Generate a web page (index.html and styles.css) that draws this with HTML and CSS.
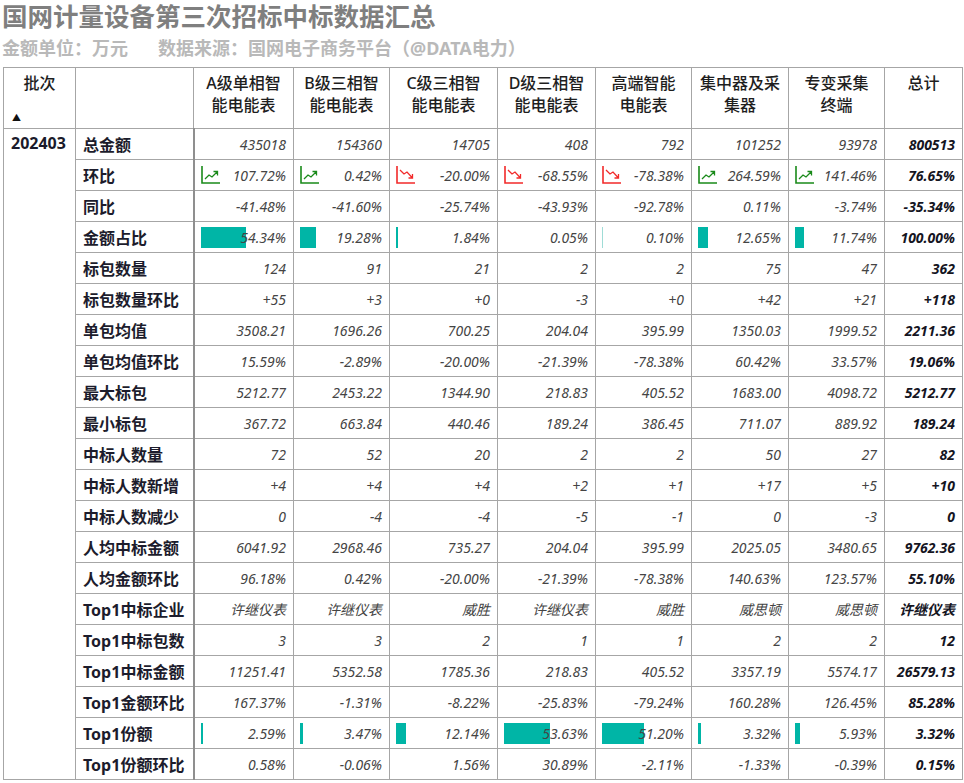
FILE: index.html
```html
<!DOCTYPE html>
<html lang="zh-CN">
<head>
<meta charset="utf-8">
<title>国网计量设备第三次招标中标数据汇总</title>
<link rel="stylesheet" href="styles.css">
</head>
<body>
<h1 class="title">国网计量设备第三次招标中标数据汇总</h1>
<div class="subtitle"><span>金额单位：万元</span><span>数据来源：国网电子商务平台（@DATA电力）</span></div>
<table class="grid">
<colgroup>
<col style="width:72px"><col style="width:118px"><col style="width:100px"><col style="width:96px"><col style="width:108px"><col style="width:98px"><col style="width:96px"><col style="width:97px"><col style="width:96px"><col style="width:78px">
</colgroup>
<thead>
<tr class="head">
<th class="batch-h"><div>批次</div><div class="sort">▲</div></th>
<th></th>
<th>A级单相智<br>能电能表</th>
<th>B级三相智<br>能电能表</th>
<th>C级三相智<br>能电能表</th>
<th>D级三相智<br>能电能表</th>
<th>高端智能<br>电能表</th>
<th>集中器及采<br>集器</th>
<th>专变采集<br>终端</th>
<th>总计</th>
</tr>
</thead>
<tbody>
<tr><td class="batch" rowspan="21">202403</td><td class="lbl">总金额</td><td class="v">435018</td><td class="v">154360</td><td class="v">14705</td><td class="v">408</td><td class="v">792</td><td class="v">101252</td><td class="v">93978</td><td class="v tot">800513</td></tr>
<tr><td class="lbl">环比</td>
<td class="v"><div class="ic"><svg class="trend up" viewBox="0 0 19 18"><path class="ax" d="M1 0V17H19"/><path d="M4 13L8 9L11 11L16.5 5.5M12.5 5.5H16.5V9.5"/></svg><span>107.72%</span></div></td>
<td class="v"><div class="ic"><svg class="trend up" viewBox="0 0 19 18"><path class="ax" d="M1 0V17H19"/><path d="M4 13L8 9L11 11L16.5 5.5M12.5 5.5H16.5V9.5"/></svg><span>0.42%</span></div></td>
<td class="v"><div class="ic"><svg class="trend down" viewBox="0 0 19 18"><path class="ax" d="M1 0V17H19"/><path d="M4 4L8 8L11 6L16.5 12M16.5 8V12H12.5"/></svg><span>-20.00%</span></div></td>
<td class="v"><div class="ic"><svg class="trend down" viewBox="0 0 19 18"><path class="ax" d="M1 0V17H19"/><path d="M4 4L8 8L11 6L16.5 12M16.5 8V12H12.5"/></svg><span>-68.55%</span></div></td>
<td class="v"><div class="ic"><svg class="trend down" viewBox="0 0 19 18"><path class="ax" d="M1 0V17H19"/><path d="M4 4L8 8L11 6L16.5 12M16.5 8V12H12.5"/></svg><span>-78.38%</span></div></td>
<td class="v"><div class="ic"><svg class="trend up" viewBox="0 0 19 18"><path class="ax" d="M1 0V17H19"/><path d="M4 13L8 9L11 11L16.5 5.5M12.5 5.5H16.5V9.5"/></svg><span>264.59%</span></div></td>
<td class="v"><div class="ic"><svg class="trend up" viewBox="0 0 19 18"><path class="ax" d="M1 0V17H19"/><path d="M4 13L8 9L11 11L16.5 5.5M12.5 5.5H16.5V9.5"/></svg><span>141.46%</span></div></td>
<td class="v tot">76.65%</td></tr>
<tr><td class="lbl">同比</td><td class="v">-41.48%</td><td class="v">-41.60%</td><td class="v">-25.74%</td><td class="v">-43.93%</td><td class="v">-92.78%</td><td class="v">0.11%</td><td class="v">-3.74%</td><td class="v tot">-35.34%</td></tr>
<tr><td class="lbl">金额占比</td>
<td class="v"><div class="bc"><i class="bar" style="width:45px"></i><span>54.34%</span></div></td>
<td class="v"><div class="bc"><i class="bar" style="width:16px"></i><span>19.28%</span></div></td>
<td class="v"><div class="bc"><i class="bar" style="width:2px"></i><span>1.84%</span></div></td>
<td class="v"><div class="bc"><i class="bar" style="width:0px"></i><span>0.05%</span></div></td>
<td class="v"><div class="bc"><i class="bar faint" style="width:1px"></i><span>0.10%</span></div></td>
<td class="v"><div class="bc"><i class="bar" style="width:10px"></i><span>12.65%</span></div></td>
<td class="v"><div class="bc"><i class="bar" style="width:9px"></i><span>11.74%</span></div></td>
<td class="v tot">100.00%</td></tr>
<tr><td class="lbl">标包数量</td><td class="v">124</td><td class="v">91</td><td class="v">21</td><td class="v">2</td><td class="v">2</td><td class="v">75</td><td class="v">47</td><td class="v tot">362</td></tr>
<tr><td class="lbl">标包数量环比</td><td class="v">+55</td><td class="v">+3</td><td class="v">+0</td><td class="v">-3</td><td class="v">+0</td><td class="v">+42</td><td class="v">+21</td><td class="v tot">+118</td></tr>
<tr><td class="lbl">单包均值</td><td class="v">3508.21</td><td class="v">1696.26</td><td class="v">700.25</td><td class="v">204.04</td><td class="v">395.99</td><td class="v">1350.03</td><td class="v">1999.52</td><td class="v tot">2211.36</td></tr>
<tr><td class="lbl">单包均值环比</td><td class="v">15.59%</td><td class="v">-2.89%</td><td class="v">-20.00%</td><td class="v">-21.39%</td><td class="v">-78.38%</td><td class="v">60.42%</td><td class="v">33.57%</td><td class="v tot">19.06%</td></tr>
<tr><td class="lbl">最大标包</td><td class="v">5212.77</td><td class="v">2453.22</td><td class="v">1344.90</td><td class="v">218.83</td><td class="v">405.52</td><td class="v">1683.00</td><td class="v">4098.72</td><td class="v tot">5212.77</td></tr>
<tr><td class="lbl">最小标包</td><td class="v">367.72</td><td class="v">663.84</td><td class="v">440.46</td><td class="v">189.24</td><td class="v">386.45</td><td class="v">711.07</td><td class="v">889.92</td><td class="v tot">189.24</td></tr>
<tr><td class="lbl">中标人数量</td><td class="v">72</td><td class="v">52</td><td class="v">20</td><td class="v">2</td><td class="v">2</td><td class="v">50</td><td class="v">27</td><td class="v tot">82</td></tr>
<tr><td class="lbl">中标人数新增</td><td class="v">+4</td><td class="v">+4</td><td class="v">+4</td><td class="v">+2</td><td class="v">+1</td><td class="v">+17</td><td class="v">+5</td><td class="v tot">+10</td></tr>
<tr><td class="lbl">中标人数减少</td><td class="v">0</td><td class="v">-4</td><td class="v">-4</td><td class="v">-5</td><td class="v">-1</td><td class="v">0</td><td class="v">-3</td><td class="v tot">0</td></tr>
<tr><td class="lbl">人均中标金额</td><td class="v">6041.92</td><td class="v">2968.46</td><td class="v">735.27</td><td class="v">204.04</td><td class="v">395.99</td><td class="v">2025.05</td><td class="v">3480.65</td><td class="v tot">9762.36</td></tr>
<tr><td class="lbl">人均金额环比</td><td class="v">96.18%</td><td class="v">0.42%</td><td class="v">-20.00%</td><td class="v">-21.39%</td><td class="v">-78.38%</td><td class="v">140.63%</td><td class="v">123.57%</td><td class="v tot">55.10%</td></tr>
<tr><td class="lbl">Top1中标企业</td><td class="v">许继仪表</td><td class="v">许继仪表</td><td class="v">威胜</td><td class="v">许继仪表</td><td class="v">威胜</td><td class="v">威思顿</td><td class="v">威思顿</td><td class="v tot">许继仪表</td></tr>
<tr><td class="lbl">Top1中标包数</td><td class="v">3</td><td class="v">3</td><td class="v">2</td><td class="v">1</td><td class="v">1</td><td class="v">2</td><td class="v">2</td><td class="v tot">12</td></tr>
<tr><td class="lbl">Top1中标金额</td><td class="v">11251.41</td><td class="v">5352.58</td><td class="v">1785.36</td><td class="v">218.83</td><td class="v">405.52</td><td class="v">3357.19</td><td class="v">5574.17</td><td class="v tot">26579.13</td></tr>
<tr><td class="lbl">Top1金额环比</td><td class="v">167.37%</td><td class="v">-1.31%</td><td class="v">-8.22%</td><td class="v">-25.83%</td><td class="v">-79.24%</td><td class="v">160.28%</td><td class="v">126.45%</td><td class="v tot">85.28%</td></tr>
<tr><td class="lbl">Top1份额</td>
<td class="v"><div class="bc"><i class="bar" style="width:2px"></i><span>2.59%</span></div></td>
<td class="v"><div class="bc"><i class="bar" style="width:3px"></i><span>3.47%</span></div></td>
<td class="v"><div class="bc"><i class="bar" style="width:10px"></i><span>12.14%</span></div></td>
<td class="v"><div class="bc"><i class="bar" style="width:46px"></i><span>53.63%</span></div></td>
<td class="v"><div class="bc"><i class="bar" style="width:42px"></i><span>51.20%</span></div></td>
<td class="v"><div class="bc"><i class="bar" style="width:3px"></i><span>3.32%</span></div></td>
<td class="v"><div class="bc"><i class="bar" style="width:5px"></i><span>5.93%</span></div></td>
<td class="v tot">3.32%</td></tr>
<tr><td class="lbl">Top1份额环比</td><td class="v">0.58%</td><td class="v">-0.06%</td><td class="v">1.56%</td><td class="v">30.89%</td><td class="v">-2.11%</td><td class="v">-1.33%</td><td class="v">-0.39%</td><td class="v tot">0.15%</td></tr>
</tbody>
</table>
</body>
</html>
```

FILE: styles.css
```css
html, body {
  margin: 0;
  padding: 0;
  background: #ffffff;
}
body {
  padding: 0 2px;
  font-family: "Noto Sans", "Noto Sans CJK SC", sans-serif;
  color: #222;
}
.title {
  margin: 0;
  font-size: 25.5px;
  line-height: 32px;
  font-weight: 700;
  color: #7f7f7f;
}
.subtitle {
  display: flex;
  gap: 30px;
  margin-top: 4px;
  font-size: 18px;
  line-height: 24px;
  font-weight: 700;
  color: #b9b9b9;
}
.grid {
  margin-top: 7px;
  margin-left: 1px;
  border-collapse: collapse;
  table-layout: fixed;
  width: 959px;
  border: 1px solid #9c9c9c;
}
.grid th, .grid td {
  border: 1px solid #a6a6a6;
  padding: 0;
}
.head {
  height: 61px;
}
.grid th {
  vertical-align: top;
  text-align: center;
  font-size: 16px;
  line-height: 22px;
  font-weight: 500;
  color: #1e1e1e;
  padding: 4px 6px 0;
}
.sort {
  text-align: left;
  font-size: 9px;
  line-height: 12px;
  margin-top: 18px;
  padding-left: 2px;
  color: #111;
}
.grid tbody tr {
  height: 31px;
}
.grid td.batch {
  vertical-align: top;
  font-size: 16px;
  line-height: 29px;
  font-weight: 700;
  color: #1b1b2b;
  padding-left: 7px;
}
.grid td.lbl {
  font-size: 16px;
  font-weight: 700;
  color: #1c1c2c;
  padding-left: 7px;
  white-space: nowrap;
  border-right: 2px solid #8f8f8f;
}
.grid td.v {
  text-align: right;
  font-size: 14px;
  font-style: italic;
  color: #444444;
  padding: 0 7px 0 6px;
  white-space: nowrap;
}
.grid td.tot {
  font-weight: 700;
  color: #15151f;
}
.ic {
  display: flex;
  align-items: center;
  justify-content: space-between;
}
.trend {
  width: 19px;
  height: 18px;
  fill: none;
  stroke-width: 1.3;
  flex: none;
}
.trend .ax {
  stroke-width: 1.6;
}
.trend.up {
  stroke: #1a8a1a;
}
.trend.down {
  stroke: #f22a2a;
}
.bc {
  display: grid;
  align-items: center;
}
.bc > * {
  grid-area: 1 / 1;
}
.bar {
  display: block;
  justify-self: start;
  height: 21px;
  background: #00b5a6;
}
.bar.faint {
  background: #9fdcd6;
}
.bc span {
  justify-self: end;
  position: relative;
}
```
